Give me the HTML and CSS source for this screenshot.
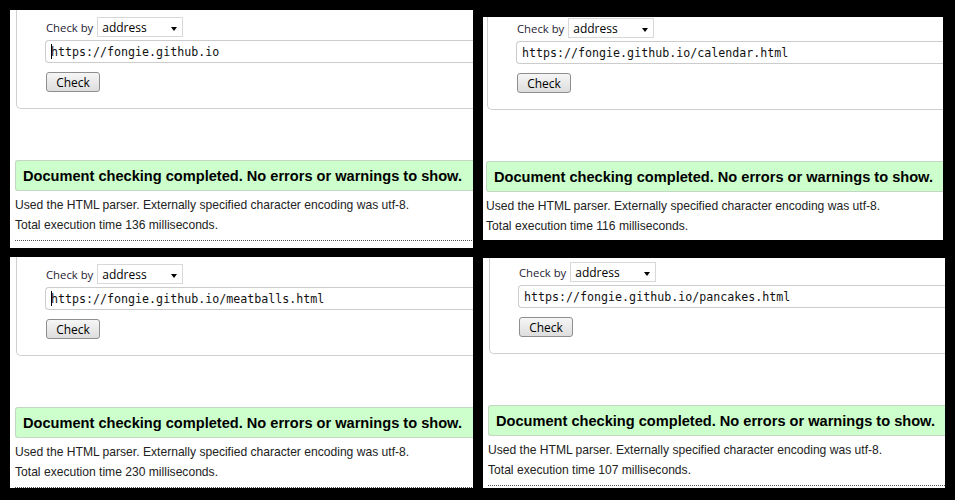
FILE: index.html
```html
<!DOCTYPE html>
<html>
<head>
<meta charset="utf-8">
<link rel="stylesheet" href="styles.css">
</head>
<body>
<div class="desk">
  <section class="shot shot-a">
    <div class="page">
      <div class="form-box">
        <div class="by-row"><span class="by-label">Check by</span><span class="select"><span>address</span><span class="arrow"></span></span></div>
        <div class="url"><span class="caret"></span>https://fongie.github.io</div>
        <span class="btn">Check</span>
      </div>
      <p class="ok">Document checking completed. No errors or warnings to show.</p>
      <p class="info first">Used the HTML parser. Externally specified character encoding was utf-8.</p>
      <p class="info">Total execution time 136 milliseconds.</p>
      <div class="sep"></div>
    </div>
  </section>
  <section class="shot shot-b">
    <div class="page">
      <div class="form-box">
        <div class="by-row"><span class="by-label">Check by</span><span class="select"><span>address</span><span class="arrow"></span></span></div>
        <div class="url">https://fongie.github.io/calendar.html</div>
        <span class="btn">Check</span>
      </div>
      <p class="ok">Document checking completed. No errors or warnings to show.</p>
      <p class="info first">Used the HTML parser. Externally specified character encoding was utf-8.</p>
      <p class="info">Total execution time 116 milliseconds.</p>
      <div class="sep"></div>
    </div>
  </section>
  <section class="shot shot-c">
    <div class="page">
      <div class="form-box">
        <div class="by-row"><span class="by-label">Check by</span><span class="select"><span>address</span><span class="arrow"></span></span></div>
        <div class="url"><span class="caret"></span>https://fongie.github.io/meatballs.html</div>
        <span class="btn">Check</span>
      </div>
      <p class="ok">Document checking completed. No errors or warnings to show.</p>
      <p class="info first">Used the HTML parser. Externally specified character encoding was utf-8.</p>
      <p class="info">Total execution time 230 milliseconds.</p>
      <div class="sep"></div>
    </div>
  </section>
  <section class="shot shot-d">
    <div class="page">
      <div class="form-box">
        <div class="by-row"><span class="by-label">Check by</span><span class="select"><span>address</span><span class="arrow"></span></span></div>
        <div class="url">https://fongie.github.io/pancakes.html</div>
        <span class="btn">Check</span>
      </div>
      <p class="ok">Document checking completed. No errors or warnings to show.</p>
      <p class="info first">Used the HTML parser. Externally specified character encoding was utf-8.</p>
      <p class="info">Total execution time 107 milliseconds.</p>
      <div class="sep"></div>
    </div>
  </section>
</div>
</body>
</html>
```
FILE: styles.css
```css
html, body {
  margin: 0;
  background: #000;
}
.desk {
  display: grid;
  grid-template-columns: 463px 462px;
  column-gap: 10px;
  row-gap: 9px;
  padding: 10px 0 0 10px;
  align-items: start;
}
.shot {
  background: #fff;
  overflow: hidden;
}
.shot-a { height: 238px; }
.shot-b { height: 223px; width: 460px; margin-top: 7px; }
.shot-c { height: 231px; }
.shot-d { height: 230px; margin-top: 1px; }

.page {
  width: 560px;
}
.shot-b .page { margin: -6px 0 0 -2px; }
.shot-d .page { margin-top: -3px; }

.form-box {
  margin-left: 6px;
  border: 1px solid #cfcfcf;
  border-top: 0;
  border-right: 0;
  border-radius: 0 0 0 5px;
  padding: 7px 0 16px 29px;
}
.by-row {
  display: flex;
  align-items: center;
  height: 20px;
}
.by-label {
  font: 11.3px "Open Sans", sans-serif;
  color: #1e2233;
  margin-right: 4px;
}
.select {
  display: flex;
  align-items: center;
  width: 86px;
  height: 20px;
  box-sizing: border-box;
  border: 1px solid #d8d8d8;
  padding: 0 5px 0 4px;
  font: 12px "Open Sans", sans-serif;
  color: #000;
}
.arrow {
  margin-left: auto;
  margin-top: 3px;
  width: 0;
  height: 0;
  border-left: 3.5px solid transparent;
  border-right: 3.5px solid transparent;
  border-top: 4px solid #000;
}
.url {
  display: flex;
  align-items: center;
  margin: 3px 0 0 -1px;
  height: 23px;
  box-sizing: border-box;
  border: 1px solid #cccccc;
  border-right: 0;
  border-radius: 4px 0 0 4px;
  padding-left: 5px;
  font: 11.65px "DejaVu Sans Mono", monospace;
  color: #111;
}
.caret {
  display: inline-block;
  width: 1px;
  height: 15px;
  background: #000;
  margin-right: -1px;
}
.btn {
  display: flex;
  justify-content: center;
  align-items: center;
  margin-top: 9px;
  width: 54px;
  height: 20px;
  box-sizing: border-box;
  border: 1px solid #8e8e8e;
  border-radius: 3px;
  background: linear-gradient(#f6f6f6, #dddddd);
  font: 12px "Open Sans", sans-serif;
  color: #000;
}
.ok {
  display: flex;
  align-items: center;
  margin: 51px 0 0 5px;
  height: 31px;
  box-sizing: border-box;
  border: 1px solid #c4d6c4;
  border-right: 0;
  border-radius: 3px 0 0 3px;
  padding-left: 7px;
  background: #ccffcc;
  font: bold 14.6px "Liberation Sans", Arial, sans-serif;
  color: #000;
}
.info {
  margin: 0 0 0 5px;
  font: 12.1px/20px "Liberation Sans", Arial, sans-serif;
  color: #222;
}
.info.first {
  margin-top: 4px;
}
.sep {
  margin: 5px 0 0 5px;
  border-top: 1px dotted #555;
}
```
